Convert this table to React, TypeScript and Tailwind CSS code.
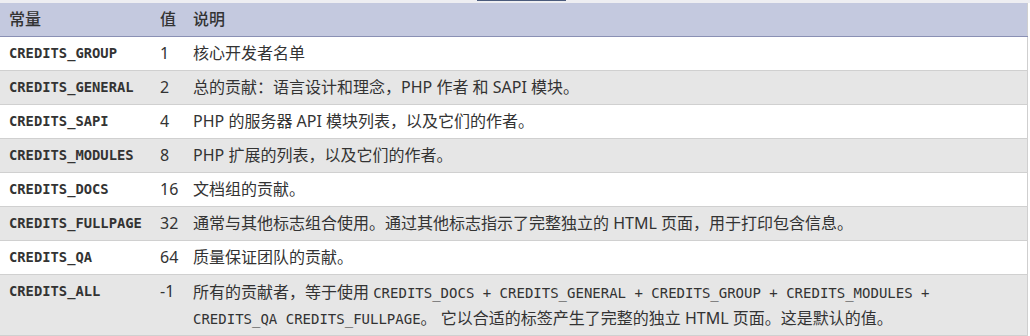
const rows: { name: string; value: string; desc: React.ReactNode }[] = [
  { name: 'CREDITS_GROUP', value: '1', desc: '核心开发者名单' },
  { name: 'CREDITS_GENERAL', value: '2', desc: '总的贡献：语言设计和理念，PHP 作者 和 SAPI 模块。' },
  { name: 'CREDITS_SAPI', value: '4', desc: 'PHP 的服务器 API 模块列表，以及它们的作者。' },
  { name: 'CREDITS_MODULES', value: '8', desc: 'PHP 扩展的列表，以及它们的作者。' },
  { name: 'CREDITS_DOCS', value: '16', desc: '文档组的贡献。' },
  {
    name: 'CREDITS_FULLPAGE',
    value: '32',
    desc: '通常与其他标志组合使用。通过其他标志指示了完整独立的 HTML 页面，用于打印包含信息。',
  },
  { name: 'CREDITS_QA', value: '64', desc: '质量保证团队的贡献。' },
  {
    name: 'CREDITS_ALL',
    value: '-1',
    desc: (
      <div className="leading-[26px]">
        所有的贡献者，等于使用{' '}
        <code className="font-['DejaVu_Sans_Mono',monospace] text-[14px] leading-none">
          CREDITS_DOCS + CREDITS_GENERAL + CREDITS_GROUP + CREDITS_MODULES +<br />CREDITS_QA CREDITS_FULLPAGE
        </code>
        。 它以合适的标签产生了完整的独立 HTML 页面。这是默认的值。
      </div>
    ),
  },
];

export default function App() {
  return (
    <div className="w-[1030px] h-[336px] bg-white font-['Noto_Sans','Noto_Sans_CJK_SC',sans-serif] text-[#333]">
      <div className="h-[3px] bg-[#eeeef2] relative">
        <div className="absolute left-[477px] top-0 w-[89px] h-[1px] bg-[#4b5b7c]" />
      </div>
      <table className="w-[1028px] border-collapse border-r border-[#cfcfcf] text-[16px] leading-[25px]">
        <thead>
          <tr className="bg-[#c4c9df] border-b border-[#8a90b4]">
            <th className="w-[152px] h-[33px] pl-[9px] text-left font-medium">常量</th>
            <th className="w-[33px] pl-[8px] text-left font-medium">值</th>
            <th className="pl-[8px] text-left font-medium">说明</th>
          </tr>
        </thead>
        <tbody>
          {rows.map((r, i) => (
            <tr key={r.name} className={`border-b border-[#d0d0d0] ${i % 2 ? 'bg-[#e6e6e6]' : 'bg-white'}`}>
              <td className="pl-[9px] pr-1 py-1 align-top">
                <div className="font-['DejaVu_Sans_Mono',monospace] text-[13.8px] leading-[25px] font-bold">{r.name}</div>
              </td>
              <td className="pl-[8px] py-1 align-top">{r.value}</td>
              <td className="pl-[8px] pr-2 py-1 align-top">{r.desc}</td>
            </tr>
          ))}
        </tbody>
      </table>
    </div>
  );
}
